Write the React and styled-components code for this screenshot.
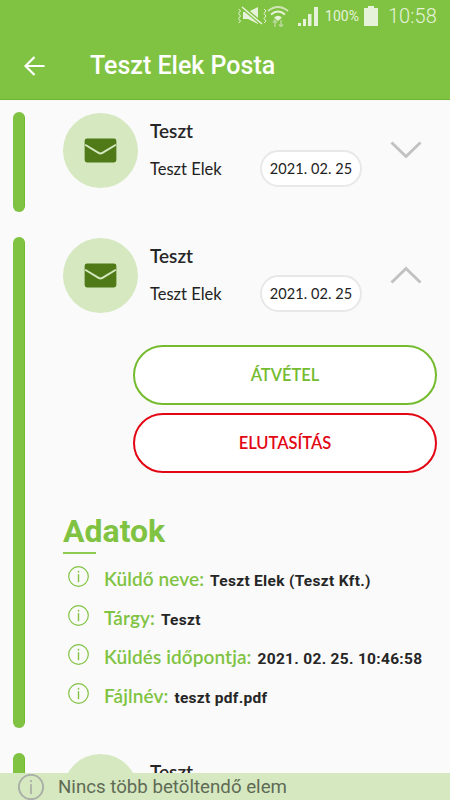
import React from 'react'
import styled, { createGlobalStyle } from 'styled-components'

const GlobalStyle = createGlobalStyle`
  html, body {
    margin: 0;
    padding: 0;
    height: 100%;
    background: #fafafa;
  }
  #root {
    height: 100%;
  }
`

const Screen = styled.div`
  position: relative;
  width: 450px;
  height: 800px;
  overflow: hidden;
  background: #fafafa;
  font-family: Lato, "Liberation Sans", sans-serif;
  color: #222;
`

const Header = styled.header`
  height: 100px;
  box-sizing: border-box;
  background: #80c342;
  border-bottom: 1px solid #6fb52f;
`

const StatusBar = styled.div`
  height: 32px;
  display: flex;
  align-items: center;
  justify-content: flex-end;
  padding-right: 13px;
  color: #e6f2da;
  font-family: Roboto, sans-serif;
`

const StatusPercent = styled.span`
  font-size: 14px;
  margin-left: 6px;
`

const StatusGap = styled.span`
  width: ${props => props.$width}px;
`

const StatusTime = styled.span`
  font-size: 20px;
  font-weight: 300;
  margin-left: 10px;
  letter-spacing: 0.1px;
`

const Toolbar = styled.div`
  height: 67px;
  display: flex;
  align-items: center;
  padding-left: 24px;
`

const Title = styled.h1`
  margin: 0 0 0 45px;
  font-family: Roboto, sans-serif;
  font-weight: 500;
  font-size: 25px;
  color: #fff;
`

const List = styled.main`
  display: flex;
  flex-direction: column;
  gap: 25px;
  padding: 12px 0 0 13px;
`

const Item = styled.article`
  display: flex;
  gap: 38px;
`

const Bar = styled.div`
  width: 12px;
  flex: none;
  border-radius: 6px;
  background: #80c342;
  border-right: 1px solid #74bb2e;
  box-sizing: border-box;
`

const ItemBody = styled.div`
  flex: 1;
  min-width: 0;
`

const Summary = styled.div`
  height: 100px;
  display: flex;
  align-items: flex-start;
`

const Avatar = styled.div`
  width: 75px;
  height: 75px;
  flex: none;
  margin-top: 1px;
  border-radius: 50%;
  background: #d5e8c0;
  display: flex;
  align-items: center;
  justify-content: center;
`

const SummaryText = styled.div`
  margin-left: 12px;
  width: 212px;
  padding-top: 7px;
`

const Subject = styled.div`
  font-size: 19px;
  font-weight: 600;
  line-height: 24px;
  color: #262626;
`

const SenderRow = styled.div`
  margin-top: 7px;
  display: flex;
  align-items: center;
  justify-content: space-between;
  height: 37px;
`

const Sender = styled.span`
  font-size: 16.5px;
  color: #222;
`

const DatePill = styled.span`
  box-sizing: border-box;
  width: 102px;
  height: 37px;
  border: 2px solid #e8e8e8;
  border-radius: 19px;
  background: #fff;
  display: flex;
  align-items: center;
  justify-content: center;
  font-size: 14.5px;
  letter-spacing: 0.1px;
  color: #222;
`

const ChevronSlot = styled.div`
  margin: 29px 0 0 28px;
  width: 32px;
  height: 18px;
`

const Actions = styled.div`
  display: flex;
  flex-direction: column;
  gap: 8px;
  margin: 8px 13px 0 70px;
`

const ActionButton = styled.button`
  box-sizing: border-box;
  width: 304px;
  height: 60px;
  border-radius: 30px;
  border: 2.5px solid ${props => props.$color};
  background: #fff;
  color: ${props => props.$color};
  font-family: Lato, sans-serif;
  font-size: 16.5px;
  font-weight: 600;
  padding: 0;
`

const Details = styled.section`
  margin-top: 38px;
  padding-bottom: 15px;
`

const DetailsTitle = styled.h2`
  margin: 0;
  display: inline-block;
  font-family: Roboto, sans-serif;
  font-size: 32px;
  font-weight: 700;
  line-height: 40px;
  color: #80c342;
`

const TitleRule = styled.div`
  width: 33px;
  height: 2px;
  margin-top: 1px;
  background: #8ccb50;
`

const DetailRows = styled.div`
  margin-top: 3px;
  display: flex;
  flex-direction: column;
`

const DetailRow = styled.div`
  height: 39px;
  display: flex;
  align-items: center;
  padding-left: 5px;
`

const Label = styled.span`
  margin: 4px 0 0 15px;
  font-size: 19px;
  font-weight: 600;
  letter-spacing: 0.1px;
  color: #80c342;
`

const Value = styled.span`
  margin: 8px 0 0 6px;
  font-family: Roboto, sans-serif;
  font-size: 15.5px;
  font-weight: 700;
  letter-spacing: 0.3px;
  color: #262626;
`

const Footer = styled.div`
  position: absolute;
  left: 0;
  right: 0;
  bottom: 0;
  height: 27px;
  display: flex;
  align-items: center;
  padding-left: 18px;
  background: #d5e8c0;
  font-family: Roboto, sans-serif;
  font-size: 18.7px;
  color: #5f6b55;
`

const FooterText = styled.span`
  margin-left: 14px;
`

const Envelope = () => (
  <svg width="33" height="25" viewBox="0 0 34 26">
    <rect x="0.5" y="0.5" width="33" height="25" rx="2.5" fill="#4f7a17" />
    <path d="M1 7 L15 15.5 Q17 16.7 19 15.5 L33 7" fill="none" stroke="#d5e8c0" strokeWidth="2" />
  </svg>
)

const Chevron = ({ up }) => (
  <svg width="32" height="18" viewBox="0 0 32 18">
    <path
      d={up ? 'M1.5 16.5 L16 2.5 L30.5 16.5' : 'M1.5 1.5 L16 15.5 L30.5 1.5'}
      fill="none"
      stroke="#c2c2c2"
      strokeWidth="3"
    />
  </svg>
)

const InfoIcon = ({ size = 21, color = '#80c342', width = 1.2 }) => (
  <svg width={size} height={size} viewBox="0 0 21 21">
    <circle cx="10.5" cy="10.5" r="9.8" fill="none" stroke={color} strokeWidth={width} />
    <rect x="9.8" y="4.8" width="1.4" height="1.8" fill={color} />
    <rect x="9.8" y="8.2" width="1.4" height="8" fill={color} />
  </svg>
)

const VibrateIcon = () => (
  <svg width="30" height="22" viewBox="0 0 30 22">
    <path d="M1.5 4 L3.5 6 L1.5 8.5 L3.5 11 L1.5 13.5 L3.5 16 L1.5 18" fill="none" stroke="#e6f2da" strokeWidth="1" />
    <path d="M27 4 L29 6 L27 8.5 L29 11 L27 13.5 L29 16 L27 18" fill="none" stroke="#e6f2da" strokeWidth="1" />
    <path d="M6 7 H11 L21 2 V19 L11 14 H6 Z" fill="#e6f2da" />
    <path d="M5 2 L25 19" stroke="#80c342" strokeWidth="4" />
    <path d="M5 2 L25 19" stroke="#e6f2da" strokeWidth="1.5" />
  </svg>
)

const WifiIcon = () => (
  <svg width="22" height="22" viewBox="0 0 22 22">
    <path d="M1 6 Q11 -2 21 6" fill="none" stroke="#cfe5b8" strokeWidth="2" />
    <path d="M4 9.5 Q11 3.5 18 9.5" fill="none" stroke="#e6f2da" strokeWidth="2" />
    <path d="M7 12.5 Q11 9 15 12.5 L11 16 Z" fill="#e6f2da" />
    <path d="M8 15 V22 M6 17.5 L8 15 L10 17.5 M14 15 V22 M12 19.5 L14 22 L16 19.5" fill="none" stroke="#b5d796" strokeWidth="1.5" />
  </svg>
)

const SignalIcon = () => (
  <svg width="21" height="21" viewBox="0 0 21 21">
    <rect x="0" y="17" width="3" height="3" fill="#e6f2da" />
    <rect x="5" y="13" width="3" height="7" fill="#e6f2da" />
    <rect x="10" y="8" width="3.5" height="12" fill="#e6f2da" />
    <rect x="16" y="1" width="4" height="19" fill="#e6f2da" />
  </svg>
)

const BatteryIcon = () => (
  <svg width="14" height="20" viewBox="0 0 14 20">
    <path d="M4 0 H10 V2 H14 V20 H0 V2 H4 Z" fill="#e6f2da" />
  </svg>
)

const MailSummary = ({ open }) => (
  <Summary>
    <Avatar><Envelope /></Avatar>
    <SummaryText>
      <Subject>Teszt</Subject>
      <SenderRow>
        <Sender>Teszt Elek</Sender>
        <DatePill>2021. 02. 25</DatePill>
      </SenderRow>
    </SummaryText>
    <ChevronSlot><Chevron up={open} /></ChevronSlot>
  </Summary>
)

const details = [
  { label: 'Küldő neve:', value: 'Teszt Elek (Teszt Kft.)' },
  { label: 'Tárgy:', value: 'Teszt' },
  { label: 'Küldés időpontja:', value: '2021. 02. 25. 10:46:58' },
  { label: 'Fájlnév:', value: 'teszt pdf.pdf' }
]

const App = () => (
  <Screen>
    <GlobalStyle />
    <Header>
      <StatusBar>
        <VibrateIcon />
        <WifiIcon />
        <StatusGap $width={9} />
        <SignalIcon />
        <StatusPercent>100%</StatusPercent>
        <StatusGap $width={5} />
        <BatteryIcon />
        <StatusTime>10:58</StatusTime>
      </StatusBar>
      <Toolbar>
        <svg width="21" height="20" viewBox="0 0 21 20">
          <path d="M20.5 10 H2 M10.5 1 L1.5 10 L10.5 19" fill="none" stroke="#fff" strokeWidth="2.2" />
        </svg>
        <Title>Teszt Elek Posta</Title>
      </Toolbar>
    </Header>
    <List>
      <Item>
        <Bar />
        <ItemBody><MailSummary /></ItemBody>
      </Item>
      <Item>
        <Bar />
        <ItemBody>
          <MailSummary open />
          <Actions>
            <ActionButton $color="#74bb2e">ÁTVÉTEL</ActionButton>
            <ActionButton $color="#e30613">ELUTASÍTÁS</ActionButton>
          </Actions>
          <Details>
            <DetailsTitle>Adatok</DetailsTitle>
            <TitleRule />
            <DetailRows>
              {details.map(row => (
                <DetailRow key={row.label}>
                  <InfoIcon />
                  <Label>{row.label}</Label>
                  <Value>{row.value}</Value>
                </DetailRow>
              ))}
            </DetailRows>
          </Details>
        </ItemBody>
      </Item>
      <Item>
        <Bar />
        <ItemBody><MailSummary /></ItemBody>
      </Item>
    </List>
    <Footer>
      <InfoIcon size={26} color="#a9afa6" width={1.6} />
      <FooterText>Nincs több betöltendő elem</FooterText>
    </Footer>
  </Screen>
)

export default App
